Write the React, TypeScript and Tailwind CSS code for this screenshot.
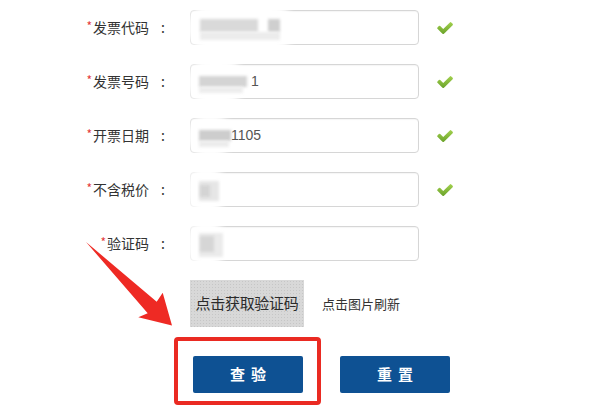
import React from 'react';

interface FieldRowProps {
  label: string;
  text?: string;
  textOffset?: number;
  blur: React.ReactNode;
  checked?: boolean;
}

// blurred-out parts of the filled values
function Smudge({ haze, blocks }: { haze: string; blocks: string[] }) {
  return (
    <>
      <div className={`absolute bg-white rounded-full blur-[3px] ${haze}`} />
      {blocks.map((b, i) => (
        <div key={i} className={`absolute blur-[1.5px] ${b}`} />
      ))}
    </>
  );
}

function CheckMark() {
  return (
    <svg className="ml-[18px]" width="16" height="12" viewBox="100 340 1580 1150">
      <defs>
        <linearGradient id="chk" x1="0" y1="0" x2="0" y2="1">
          <stop offset="0" stopColor="#a2d14e" />
          <stop offset="1" stopColor="#6aa22a" />
        </linearGradient>
      </defs>
      <path
        fill="url(#chk)"
        d="M1671 566q0 40-28 68l-724 724-136 136q-28 28-68 28t-68-28l-136-136-362-362q-28-28-28-68t28-68l136-136q28-28 68-28t68 28l294 295 656-657q28-28 68-28t68 28l136 136q28 28 28 68z"
      />
    </svg>
  );
}

function FieldRow({ label, text, textOffset = 10, blur, checked = true }: FieldRowProps) {
  return (
    <div className="flex items-center h-[35px]">
      <div className="w-[190px] pr-[25px] flex justify-end items-center text-[14px] text-[#333]">
        <span className="text-[#e4393c] text-[12px] self-start mt-[10px] mr-[1px] leading-none">*</span>
        <span className="leading-[35px]">{label}</span>
        <span className="ml-[12px] leading-[35px]">:</span>
      </div>
      <div className="relative w-[229px] h-[35px] border border-[#d6d6d6] rounded-[4px] bg-white shadow-[inset_0_1px_1px_rgba(0,0,0,0.04)]">
        {blur}
        {text && (
          <span
            className="absolute top-0 leading-[33px] text-[14px] text-[#555] font-['Liberation_Sans',sans-serif]"
            style={{ left: textOffset }}
          >
            {text}
          </span>
        )}
      </div>
      {checked && <CheckMark />}
    </div>
  );
}

export default function App() {
  return (
    <div className="relative w-[600px] h-[407px] bg-white overflow-hidden font-['Noto_Sans_CJK_SC','Noto_Sans',sans-serif]">
      <div className="pt-[10px] flex flex-col gap-[19px]">
        <FieldRow
          label="发票代码"
          blur={
            <Smudge
              haze="-left-[4px] -top-[7px] w-[108px] h-[48px]"
              blocks={[
                'left-[9px] top-[8px] w-[58px] h-[13px] bg-[#d9d9d9]',
                'left-[77px] top-[8px] w-[12px] h-[13px] bg-[#cfcfcf]',
                'left-[9px] top-[21px] w-[80px] h-[8px] bg-[#ececec]',
              ]}
            />
          }
        />
        <FieldRow
          label="发票号码"
          text="1"
          textOffset={60}
          blur={
            <Smudge
              haze="-left-[4px] -top-[7px] w-[58px] h-[48px]"
              blocks={[
                'left-[8px] top-[11px] w-[48px] h-[11px] bg-[#d4d4d4]',
                'left-[8px] top-[22px] w-[44px] h-[6px] bg-[#ededed]',
              ]}
            />
          }
        />
        <FieldRow
          label="开票日期"
          text="1105"
          textOffset={40}
          blur={
            <Smudge
              haze="-left-[4px] -top-[5px] w-[46px] h-[44px]"
              blocks={[
                'left-[8px] top-[11px] w-[32px] h-[11px] bg-[#cdcdcd]',
                'left-[8px] top-[22px] w-[30px] h-[6px] bg-[#ececec]',
              ]}
            />
          }
        />
        <FieldRow
          label="不含税价"
          blur={
            <Smudge
              haze="-left-[4px] -top-[7px] w-[38px] h-[48px]"
              blocks={[
                'left-[8px] top-[8px] w-[20px] h-[20px] bg-[#e6e6e6]',
                'left-[9px] top-[12px] w-[10px] h-[12px] bg-[#d4d4d4]',
              ]}
            />
          }
        />
        <FieldRow
          label="验证码"
          checked={false}
          blur={
            <Smudge
              haze="-left-[4px] -top-[7px] w-[38px] h-[48px]"
              blocks={[
                'left-[8px] top-[6px] w-[24px] h-[24px] bg-[#ebebeb]',
                'left-[9px] top-[9px] w-[14px] h-[16px] bg-[#d6d6d6]',
              ]}
            />
          }
        />
      </div>

      {/* captcha */}
      <div className="flex items-center pl-[190px] mt-[19px]">
        <div className="w-[114px] h-[47px] flex items-center justify-center bg-[#d8d8d8] bg-[radial-gradient(#c6c6c6_0.8px,transparent_0.8px)] bg-[length:3px_3px]">
          <span className="text-[15px] text-[#2b2b2b] font-['Noto_Sans_CJK_SC',serif] tracking-[-0.3px]">点击获取验证码</span>
        </div>
        <span className="ml-[18px] text-[13px] text-[#333]">点击图片刷新</span>
      </div>

      {/* buttons */}
      <div className="flex pl-[193px] mt-[29px] gap-[37px]">
        <button className="w-[110px] h-[37px] rounded-[2px] bg-[#0e5193] text-white text-[15px] font-bold tracking-[6px] pl-[6px]">
          查验
        </button>
        <button className="w-[110px] h-[37px] rounded-[2px] bg-[#0e5193] text-white text-[15px] font-bold tracking-[6px] pl-[6px]">
          重置
        </button>
      </div>

      {/* annotation */}
      <div className="absolute left-[174px] top-[337px] w-[147px] h-[68px] border-[4px] border-[#ea2a22] rounded-[4px]" />
      <svg className="absolute left-[80px] top-[236px]" width="100" height="96" viewBox="0 0 100 96">
        <polygon
          points="6,6 76.7,65.7 82.7,56.7 92,89.5 58.3,81.3 67.7,77.3"
          fill="#ee2a24"
        />
      </svg>
    </div>
  );
}
